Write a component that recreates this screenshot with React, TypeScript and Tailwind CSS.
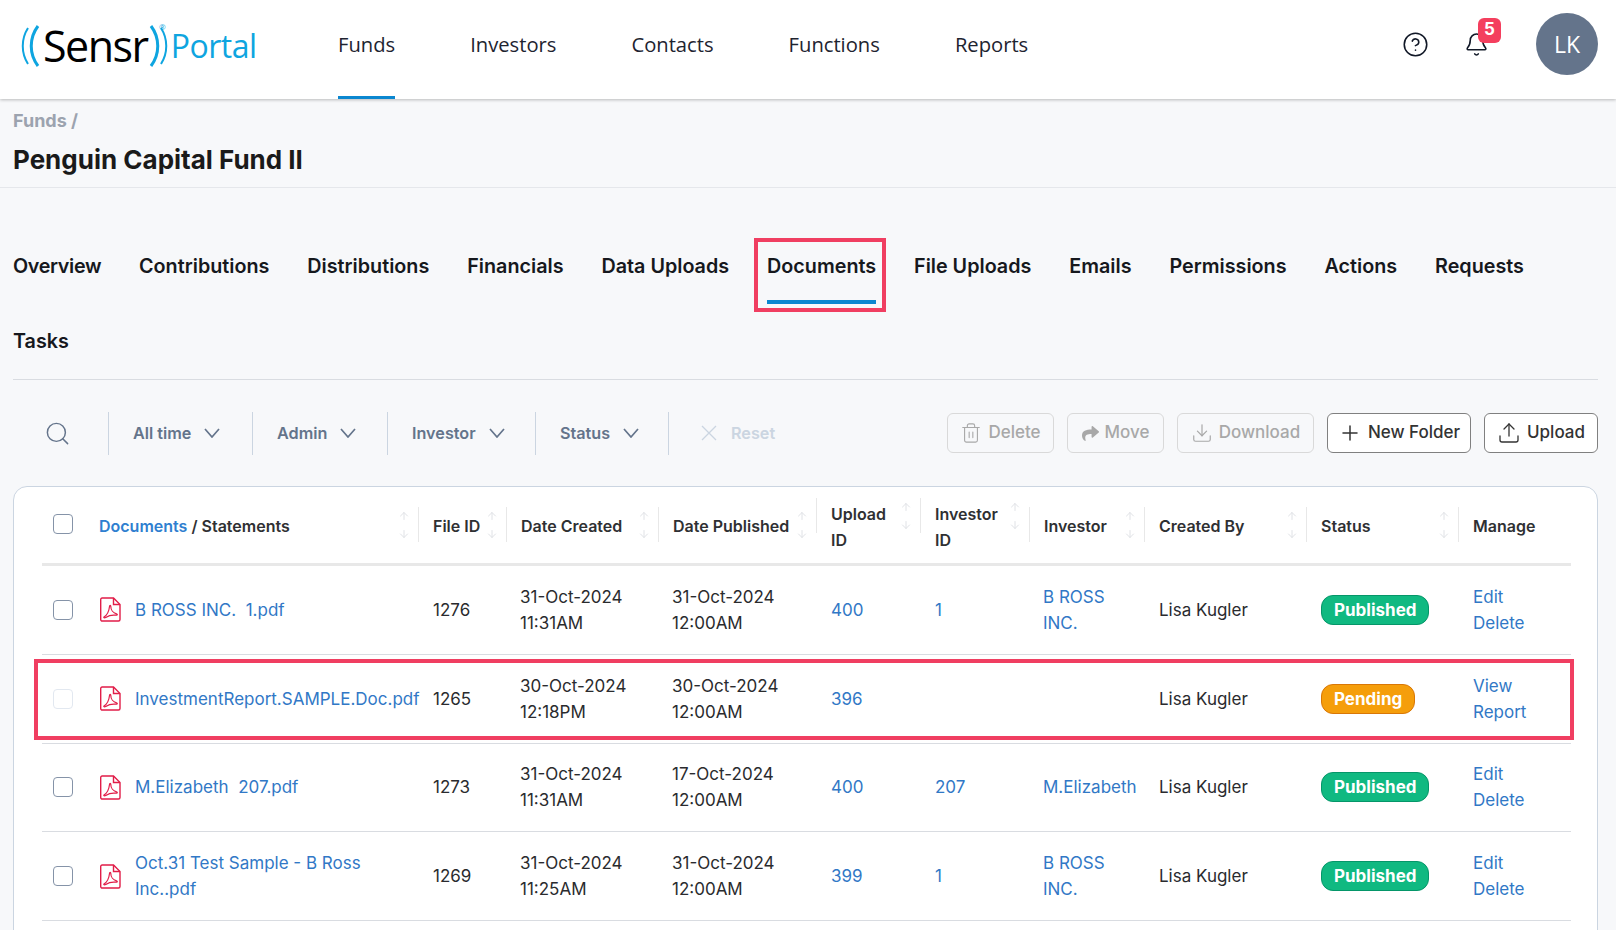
import { ArrowDown, ArrowUp, Bell, CircleHelp, Download, Plus, Search, Trash2, Upload } from "lucide-react";
import { FaShare } from "react-icons/fa";

const GRID = "grid grid-cols-[43px_333px_88px_152px_158px_104px_109px_115px_162px_152px_113px]";

type Row = {
  file: string[];
  id: string;
  created: string[];
  published: string[];
  upload: string;
  investorId?: string;
  investor?: string[];
  status: "Published" | "Pending";
  manage: string[];
  disabled?: boolean;
};

const ROWS: Row[] = [
  { file: ["B ROSS INC.  1.pdf"], id: "1276", created: ["31-Oct-2024", "11:31AM"], published: ["31-Oct-2024", "12:00AM"], upload: "400", investorId: "1", investor: ["B ROSS", "INC."], status: "Published", manage: ["Edit", "Delete"] },
  { file: ["InvestmentReport.SAMPLE.Doc.pdf"], id: "1265", created: ["30-Oct-2024", "12:18PM"], published: ["30-Oct-2024", "12:00AM"], upload: "396", status: "Pending", manage: ["View", "Report"], disabled: true },
  { file: ["M.Elizabeth  207.pdf"], id: "1273", created: ["31-Oct-2024", "11:31AM"], published: ["17-Oct-2024", "12:00AM"], upload: "400", investorId: "207", investor: ["M.Elizabeth"], status: "Published", manage: ["Edit", "Delete"] },
  { file: ["Oct.31 Test Sample - B Ross", "Inc..pdf"], id: "1269", created: ["31-Oct-2024", "11:25AM"], published: ["31-Oct-2024", "12:00AM"], upload: "399", investorId: "1", investor: ["B ROSS", "INC."], status: "Published", manage: ["Edit", "Delete"] },
];

const NAV = ["Funds", "Investors", "Contacts", "Functions", "Reports"];
const TABS = ["Overview", "Contributions", "Distributions", "Financials", "Data Uploads", "Documents", "File Uploads", "Emails", "Permissions", "Actions", "Requests"];

function Logo() {
  return (
    <div className="relative flex items-center w-[248px] h-[60px] mb-[8px] font-['Open_Sans',sans-serif]">
      <svg width="24" height="44" viewBox="0 0 24 44" fill="none" className="shrink-0 text-[#0ea5e0]">
        <path d="M8 4C1 15 1 29 8 40" stroke="currentColor" strokeWidth="2" />
        <path d="M18 2C9 14 9 30 18 42" stroke="currentColor" strokeWidth="3" />
      </svg>
      <span className="text-[43px] leading-none font-medium text-black tracking-[-1.5px] -ml-[1px]">Sensr</span>
      <svg width="24" height="44" viewBox="0 0 24 44" fill="none" className="shrink-0 text-[#0ea5e0] -ml-[1px]">
        <path d="M4 2C13 14 13 30 4 42" stroke="currentColor" strokeWidth="3" />
        <path d="M14 4C21 15 21 29 14 40" stroke="currentColor" strokeWidth="2" />
      </svg>
      <span className="text-[32px] leading-none text-[#0ea5e0] tracking-[-0.5px]">Portal</span>
      <span className="absolute left-[139px] top-[7px] text-[8px] leading-none text-[#0ea5e0]">®</span>
    </div>
  );
}

function PdfIcon() {
  return (
    <svg width="21" height="25" viewBox="0 0 21 25" fill="none" stroke="#e11d48" strokeWidth="1.4" className="shrink-0">
      <path d="M2 1h11.5L20 7.5V22.5a1.5 1.5 0 0 1-1.5 1.5h-16A1.5 1.5 0 0 1 .7 22.5V2.5A1.5 1.5 0 0 1 2 1Z" />
      <path d="M13.5 1v6.5H20" />
      <path d="M4 20c2.5-1.5 5-6 5.500-10.500.1-1.500 1.300-1.500 1.300 0 0 3.500 2.500 6.500 5.700 7.300 1.300.4 1 1.600-.3 1.400-3.500-.5-7.500.3-10.500 2.200-1.300.8-2.400.2-1.700-.4Z" strokeWidth="1.2" />
    </svg>
  );
}

function Checkbox({ disabled }: { disabled?: boolean }) {
  return <div className={`w-[20px] h-[20px] rounded-[4px] border bg-white ${disabled ? "border-[#e2e8f0]" : "border-[#8593a8]"}`} />;
}

function Sort() {
  return (
    <div className="flex flex-col gap-[6px] text-[#e0e2e6] shrink-0">
      <ArrowUp size={12} strokeWidth={2} />
      <ArrowDown size={12} strokeWidth={2} />
    </div>
  );
}

function HeadCell({ children, sort = true, first, two }: { children: React.ReactNode; sort?: boolean; first?: boolean; two?: boolean }) {
  return (
    <div className={`h-[35px] flex justify-between items-center pr-[8px] pl-[14px] ${two ? "mt-[11px]" : "mt-[20px]"} ${first ? "" : "border-l border-[#e8e8e8]"}`}>
      <div className={`self-start leading-[26px] h-[26px] ${two ? "mt-[3px]" : "mt-[6px]"}`}>{children}</div>
      {sort && <Sort />}
    </div>
  );
}

function FilterCell({ label, width }: { label: string; width: string }) {
  return (
    <div className={`h-[43px] border-l border-[#cbd5e1] flex items-center pl-[24px] gap-[13px] text-[#64748b] font-semibold ${width}`}>
      {label}
      <svg width="16" height="10" viewBox="0 0 16 10" fill="none" stroke="currentColor" strokeWidth="1.7">
        <path d="M1 1l7 8 7-8" />
      </svg>
    </div>
  );
}

function ToolButton({ icon, label, width, disabled }: { icon: React.ReactNode; label: string; width: string; disabled?: boolean }) {
  return (
    <div className={`h-[40px] rounded-[6px] border flex items-center justify-center gap-[6px] font-medium text-[17px] ${width} ${disabled ? "border-[#d9d9d9] text-[#a8a8a8]" : "border-[#808080] text-[#333333] bg-white"}`}>
      {icon}
      {label}
    </div>
  );
}

function Lines({ items, className }: { items: string[]; className?: string }) {
  return (
    <div className={className}>
      {items.map((t) => (
        <div key={t} className="whitespace-pre">{t}</div>
      ))}
    </div>
  );
}

export default function App() {
  return (
    <div className="relative h-[930px] overflow-hidden bg-[#f7f8fa] font-['Inter',sans-serif] text-[#1f2024]">
      <header className="h-[99px] bg-white shadow-[0_1px_3px_rgba(0,0,0,0.25)] flex items-center pl-[20px] pr-[18px] relative">
        <Logo />
        <nav className="flex gap-[75px] ml-[70px] h-full font-['Open_Sans',sans-serif] text-[20.2px] text-[#1e2430]">
          {NAV.map((n, i) => (
            <div key={n} className={`h-full flex items-center pb-[7px] border-b-[3px] ${i === 0 ? "border-[#0b87d0]" : "border-transparent"}`}>{n}</div>
          ))}
        </nav>
        <div className="ml-auto flex items-center mb-[11px]">
          <CircleHelp size={27} strokeWidth={1.4} className="text-[#111827]" />
          <div className="relative ml-[35px] mr-[47px]">
            <Bell size={25} strokeWidth={1.5} className="text-[#111827]" />
            <div className="absolute -top-[14px] left-[14px] w-[23px] h-[25px] rounded-[6px] bg-[#f43f5e] text-white text-[17px] font-bold flex items-center justify-center">5</div>
          </div>
          <div className="w-[62px] h-[62px] rounded-full bg-[#64748b] text-white font-['Open_Sans',sans-serif] text-[23px] flex items-center justify-center">LK</div>
        </div>
      </header>

      <div className="h-[89px] border-b border-[#e5e7eb] px-[13px] pt-[10px]">
        <div className="text-[18px] leading-[24px] font-bold text-[#9ca3af]">Funds /</div>
        <h1 className="mt-[10px] text-[26px] leading-[34px] font-bold text-[#1a1a1a]">Penguin Capital Fund II</h1>
      </div>

      <div className="ml-[13px] mr-[18px]">
        <div className="h-[192px] border-b border-[#d9dce1] pt-[42px] text-[19.75px] font-semibold text-[#16181d]">
          <div className="flex gap-[37.9px] h-[76px]">
            {TABS.map((t) => (
              <div key={t} className={`h-[76px] flex items-center pb-[2px] ${t === "Documents" ? "relative" : ""} ${t === "Overview" ? "tracking-[-0.35px]" : ""}`}>
                {t}
                {t === "Documents" && <div className="absolute left-0 right-0 bottom-[2px] h-[4px] bg-[#0b87d0]" />}
              </div>
            ))}
          </div>
          <div className="h-[72px] flex items-center">Tasks</div>
        </div>

        <div className="h-[106px] flex items-center text-[16.2px]">
          <div className="w-[95px] pl-[31px]">
            <Search size={27} strokeWidth={1.3} className="text-[#64748b]" />
          </div>
          <FilterCell label="All time" width="w-[144px]" />
          <FilterCell label="Admin" width="w-[135px]" />
          <FilterCell label="Investor" width="w-[148px]" />
          <FilterCell label="Status" width="w-[133px]" />
          <div className="h-[43px] border-l border-[#cbd5e1] flex items-center pl-[32px] gap-[14px] text-[#cbd5e1] font-semibold">
            <svg width="16" height="16" viewBox="0 0 16 16" fill="none" stroke="currentColor" strokeWidth="1.3">
              <path d="M1 1l14 14M15 1L1 15" />
            </svg>
            Reset
          </div>
          <div className="ml-auto flex gap-[13px]">
            <ToolButton disabled width="w-[107px]" label="Delete" icon={<Trash2 size={22} strokeWidth={1.2} />} />
            <ToolButton disabled width="w-[97px]" label="Move" icon={<FaShare size={17} />} />
            <ToolButton disabled width="w-[137px]" label="Download" icon={<Download size={22} strokeWidth={1.3} />} />
            <ToolButton width="w-[144px]" label="New Folder" icon={<Plus size={24} strokeWidth={1.5} />} />
            <ToolButton width="w-[114px]" label="Upload" icon={<Upload size={24} strokeWidth={1.3} />} />
          </div>
        </div>

        <div className="bg-white border border-[#cbd5e1] rounded-[14px] h-[500px] pl-[28px] pr-[26px] text-[17px] leading-[26px]">
          <div className={`${GRID} h-[79px] border-b-[3px] border-[#e8e8e8] font-semibold text-[16px] text-[#2f3033]`}>
            <div className="pl-[11px] pt-[27px]"><Checkbox /></div>
            <HeadCell first><span className="text-[#2f7fd0]">Documents</span> / Statements</HeadCell>
            <HeadCell>File ID</HeadCell>
            <HeadCell>Date Created</HeadCell>
            <HeadCell>Date Published</HeadCell>
            <HeadCell two>Upload ID</HeadCell>
            <HeadCell two>Investor ID</HeadCell>
            <HeadCell>Investor</HeadCell>
            <HeadCell>Created By</HeadCell>
            <HeadCell>Status</HeadCell>
            <HeadCell sort={false}>Manage</HeadCell>
          </div>
          {ROWS.map((r) => (
            <div key={r.id} className={`${GRID} h-[88.8px] items-center border-b border-[#d9dce1] text-[#2a2b2e]`}>
              <div className="pl-[11px]"><Checkbox disabled={r.disabled} /></div>
              <div className="pl-[15px] flex items-center gap-[14px] text-[#3178c6]">
                <PdfIcon />
                <Lines items={r.file} />
              </div>
              <div className="pl-[15px]">{r.id}</div>
              <Lines items={r.created} className="pl-[14px]" />
              <Lines items={r.published} className="pl-[14px]" />
              <div className="pl-[15px] text-[#3178c6]">{r.upload}</div>
              <div className="pl-[15px] text-[#3178c6]">{r.investorId}</div>
              <Lines items={r.investor ?? []} className="pl-[14px] text-[#3178c6]" />
              <div className="pl-[15px]">Lisa Kugler</div>
              <div className="pl-[15px]">
                <span className={`inline-flex h-[30px] items-center rounded-[12px] border px-[12px] text-white font-bold ${r.status === "Published" ? "bg-[#10b981] border-[#059669]" : "bg-[#f59e0b] border-[#d97706]"}`}>{r.status}</span>
              </div>
              <Lines items={r.manage} className="pl-[15px] text-[#3178c6]" />
            </div>
          ))}
        </div>
      </div>

      {/* annotation boxes */}
      <div className="absolute left-[754px] top-[238px] w-[132px] h-[74px] border-[4px] border-[#f03e61]" />
      <div className="absolute left-[34px] top-[659px] w-[1540px] h-[81px] border-[4px] border-[#f03e61]" />
    </div>
  );
}
